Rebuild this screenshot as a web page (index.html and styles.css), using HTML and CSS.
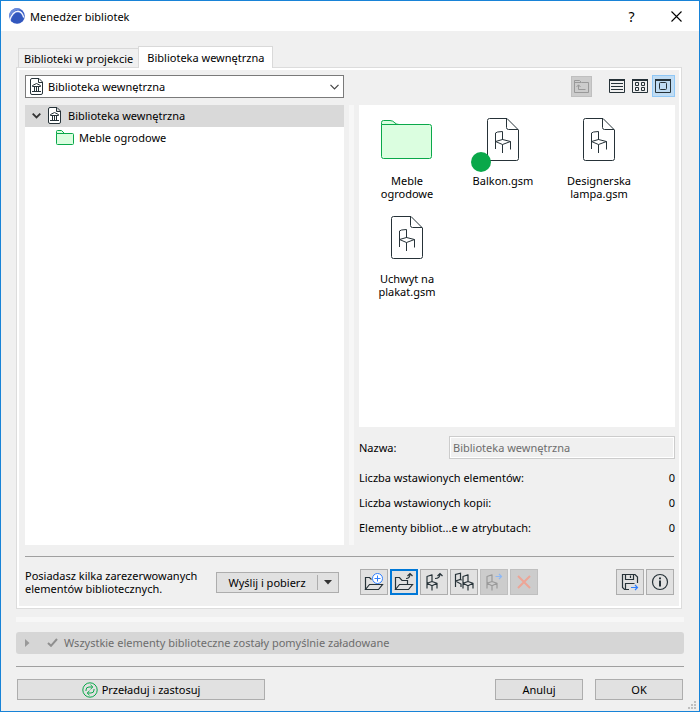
FILE: index.html
```html
<!DOCTYPE html>
<html lang="pl">
<head>
  <meta charset="utf-8">
  <title>Menedżer bibliotek</title>
  <link rel="stylesheet" href="styles.css">
</head>
<body>

<!-- shared icon shapes -->
<svg class="defs" aria-hidden="true">
  <symbol id="libfile" viewBox="0 0 13 17">
    <path d="M.5 2A1.500 1.500 0 0 1 2 .5H9L12.500 4V15A1.500 1.500 0 0 1 11 16.500H2A1.500 1.500 0 0 1 .5 15ZM8.500 .5V4.500H12.500" fill="#fff" stroke="#263238"/>
    <path d="M2.500 7.500 6.500 5.500 10.500 7.500V8.500H2.500ZM2 13.500H11M4.500 8V13M6.500 8V13M8.500 8V13" fill="none" stroke="#263238"/>
  </symbol>
  <symbol id="gsm" viewBox="0 0 96 69">
    <g fill="none" stroke="#263238" stroke-linejoin="round">
      <path d="M34.500 13.500H52L63.500 25V53.500A2 2 0 0 1 61.500 55.500H34.500A2 2 0 0 1 32.500 53.500V15.500A2 2 0 0 1 34.500 13.500ZM51.500 13.500V22.500A2 2 0 0 0 53.500 24.500H63"/>
      <path d="M40.500 44V28L42.500 27 47.500 26.500V35M40.500 36.500 47.500 34.500 55.500 36.500 47.500 39.500ZM55.500 36.500V44.500M47.500 39.500V48"/>
    </g>
  </symbol>
  <symbol id="chair" viewBox="0 0 12 17">
    <path d="M1 14.500V2.500L6 .8V7.500M1 9.200 6 7.500 11 9.200 6 11.700ZM11 9.200V14.500M6 11.700V16.500" fill="none" stroke="currentColor" stroke-width="1.200" stroke-linejoin="round"/>
  </symbol>
</svg>

<div class="window">
  <header class="titlebar">
    <svg class="logo" width="16" height="16" viewBox="0 0 16 16">
      <circle cx="8" cy="8" r="7.800" fill="#3a5fc6"/>
      <path d="M.3 9.500A7.800 7.800 0 0 1 12.500 1.700Q5 .5 .3 9.500Z" fill="#6d8ddd"/>
      <path d="M.8 12Q3.500 3.500 9 3.200Q13 3.300 14.800 9.500" fill="none" stroke="#f2f5ff" stroke-width="1.400"/>
      <path d="M2.300 13.300Q5 5 8.800 4.800Q12.500 5 14.200 12.500Q9 17.500 2.300 13.300Z" fill="#3257bd"/>
    </svg>
    <h1 class="title">Menedżer bibliotek</h1>
    <button class="title-btn" aria-label="Pomoc">?</button>
    <button class="title-btn" aria-label="Zamknij">
      <svg width="11" height="11" viewBox="0 0 11 11"><path d="M.5 .5 10.500 10.500M10.500 .5 .5 10.500" stroke="#000" stroke-width="1.100"/></svg>
    </button>
  </header>

  <main class="content">
    <div class="tabs" role="tablist">
      <button class="tab" role="tab" aria-selected="false">Biblioteki w projekcie</button>
      <button class="tab active" role="tab" aria-selected="true">Biblioteka wewnętrzna</button>
    </div>

    <section class="panel">
      <div class="columns">
        <div class="left">
          <div class="picker">
            <select class="library-select" aria-label="Biblioteka">
              <option>Biblioteka wewnętrzna</option>
            </select>
            <svg class="picker-icon" width="13" height="17"><use href="#libfile"/></svg>
            <svg class="picker-arrow" width="9" height="6" viewBox="0 0 9 6"><path d="M.5 .8 4.500 4.800 8.500 .8" fill="none" stroke="#444" stroke-width="1.200"/></svg>
          </div>
          <ul class="tree">
            <li class="tree-row selected">
              <svg class="tree-arrow" width="9" height="6" viewBox="0 0 9 6"><path d="M.7 .7 4.500 4.500 8.300 .7" fill="none" stroke="#333" stroke-width="1.800"/></svg>
              <svg width="13" height="17"><use href="#libfile"/></svg>
              <span>Biblioteka wewnętrzna</span>
            </li>
            <li class="tree-row child">
              <svg width="18" height="15" viewBox="0 0 18 15"><path d="M.5 3.500V1.500A1 1 0 0 1 1.500 .5H5.500L8.500 3.500H16.500A1 1 0 0 1 17.500 4.500V13.500A1 1 0 0 1 16.500 14.500H1.500A1 1 0 0 1 .5 13.500ZM.5 3.500H9" fill="#dbfee0" stroke="#0aa84a"/></svg>
              <span>Meble ogrodowe</span>
            </li>
          </ul>
        </div>

        <div class="splitter"></div>

        <div class="right">
          <div class="viewbar">
            <button class="up-btn" disabled aria-label="Folder nadrzędny">
              <svg width="15" height="13" viewBox="0 0 15 13"><path d="M.5 12.500V.5H5.500L7.500 2.500H14.500V12.500ZM.5 2.500H7M4.500 5V9.500H11.500M2.500 7 4.500 4.800 6.500 7" fill="none" stroke="#999"/></svg>
            </button>
            <button class="view-btn" aria-label="Lista">
              <svg width="16" height="14" viewBox="0 0 16 14"><path d="M.5 1V13.500H15.500V1M2 4.500H14M2 7.500H14M2 10.500H14" fill="none" stroke="#263238"/><path d="M0 1H16" stroke="#263238" stroke-width="2"/></svg>
            </button>
            <button class="view-btn" aria-label="Małe ikony">
              <svg width="16" height="14" viewBox="0 0 16 14"><path d="M.5 1V13.500H15.500V1M3.500 3.500H6.500V6.500H3.500ZM9.500 3.500H12.500V6.500H9.500ZM3.500 8.500H6.500V11.500H3.500ZM9.500 8.500H12.500V11.500H9.500Z" fill="none" stroke="#263238"/><path d="M0 1H16" stroke="#263238" stroke-width="2"/></svg>
            </button>
            <button class="view-btn on" aria-label="Duże ikony">
              <svg width="16" height="14" viewBox="0 0 16 14"><path d="M.5 1V13.500H15.500V1" fill="none" stroke="#263238"/><rect x="4.500" y="3.500" width="7" height="7" rx="1" fill="none" stroke="#263238"/><path d="M0 1H16" stroke="#263238" stroke-width="2"/></svg>
            </button>
          </div>

          <ul class="files">
            <li class="file">
              <svg width="96" height="69" viewBox="0 0 96 69"><path d="M22.500 19.500V17.500A2 2 0 0 1 24.500 15.500H31Q34 15.500 36 18Q37.500 19.500 40 19.500H70.500A2 2 0 0 1 72.500 21.500V51.500A2 2 0 0 1 70.500 53.500H24.500A2 2 0 0 1 22.500 51.500ZM22.500 19.500H40" fill="#dbfee0" stroke="#0aa84a"/></svg>
              <span class="file-name">Meble ogrodowe</span>
            </li>
            <li class="file">
              <svg width="96" height="69" viewBox="0 0 96 69"><use href="#gsm"/><circle cx="26" cy="57" r="10" fill="#0aa84a"/></svg>
              <span class="file-name">Balkon.gsm</span>
            </li>
            <li class="file">
              <svg width="96" height="69"><use href="#gsm"/></svg>
              <span class="file-name">Designerska lampa.gsm</span>
            </li>
            <li class="file">
              <svg width="96" height="69"><use href="#gsm"/></svg>
              <span class="file-name">Uchwyt na plakat.gsm</span>
            </li>
          </ul>

          <div class="name-row">
            <label for="name">Nazwa:</label>
            <input class="name-input" id="name" type="text" value="Biblioteka wewnętrzna" disabled>
          </div>
          <dl class="stats">
            <div class="stat"><dt>Liczba wstawionych elementów:</dt><dd>0</dd></div>
            <div class="stat"><dt>Liczba wstawionych kopii:</dt><dd>0</dd></div>
            <div class="stat"><dt>Elementy bibliot...e w atrybutach:</dt><dd>0</dd></div>
          </dl>
        </div>
      </div>

      <div class="actions">
        <p class="reserved">Posiadasz kilka zarezerwowanych elementów bibliotecznych.</p>
        <div class="split-btn">
          <button class="split-main">Wyślij i pobierz</button>
          <button class="split-arrow" aria-label="Więcej">
            <svg width="8" height="5" viewBox="0 0 8 5"><path d="M0 0H8L4 4.500Z" fill="#333"/></svg>
          </button>
        </div>
        <div class="tools">
          <button class="tool" aria-label="Nowy folder">
            <svg width="22" height="20" viewBox="0 0 22 20"><path d="M2.500 17.500V5.500H6.500L8.500 7.500M2.500 17.500 6.500 12.500H19.500L15.500 17.500Z" fill="none" stroke="#263238" stroke-width="1.200"/><circle cx="14.500" cy="6.500" r="5" fill="#fff" stroke="#2e7fff"/><path d="M14.500 3.500V9.500M11.500 6.500H17.500" stroke="#2e7fff"/></svg>
          </button>
          <button class="tool focus" aria-label="Przenieś folder">
            <svg width="22" height="20" viewBox="0 0 22 20"><path d="M2.500 17.500V5.500H6.500L9 8.500H14.500V12.500M2.500 17.500 6.500 12.500H19.500L15.500 17.500Z" fill="none" stroke="#263238" stroke-width="1.200"/><path d="M13 6.500Q17 6.500 17 2M14.500 4 17 1.500 19.500 4" fill="none" stroke="#263238" stroke-width="1.200"/></svg>
          </button>
          <button class="tool" aria-label="Przenieś element">
            <svg width="22" height="20" viewBox="0 0 22 20"><use href="#chair" x="3" y="2" width="12" height="17"/><path d="M12 6.500Q17 6.500 17 2M14.500 4 17 1.500 19.500 4" fill="none" stroke="#263238" stroke-width="1.200"/></svg>
          </button>
          <button class="tool" aria-label="Duplikuj">
            <svg width="22" height="20" viewBox="0 0 22 20"><path d="M2.500 15V2.500L7.500 1.200V7.500M2.500 9 7.500 7.500 9 8M2.500 9 8 12V15" fill="none" stroke="#263238" stroke-width="1.200"/><use href="#chair" x="9" y="2" width="12" height="17"/></svg>
          </button>
          <button class="tool" disabled aria-label="Eksportuj element">
            <svg width="22" height="20" viewBox="0 0 22 20"><use href="#chair" x="3" y="2" width="12" height="17"/><path d="M12.500 4.500H18.500M16 2 18.500 4.500 16 7" fill="none" stroke="#8db8f5" stroke-width="1.200"/></svg>
          </button>
          <button class="tool" disabled aria-label="Usuń">
            <svg width="22" height="20" viewBox="0 0 22 20"><path d="M5 4 17 16M17 4 5 16" stroke="#eda596" stroke-width="2"/></svg>
          </button>
        </div>
        <div class="tools end">
          <button class="tool" aria-label="Zapisz jako">
            <svg width="22" height="20" viewBox="0 0 22 20"><path d="M10 17.500H5.500L3.500 15.500V2.500H16L18.500 5V11M6.500 2.500V7.500H14.500V2.500M11.500 3.500V6M6.500 17V11.500H15.500" fill="none" stroke="#263238" stroke-width="1.200"/><path d="M12 15.500H18.500M16 13 18.500 15.500 16 18" fill="none" stroke="#2e7fff" stroke-width="1.200"/></svg>
          </button>
          <button class="tool" aria-label="Informacje">
            <svg width="22" height="20" viewBox="0 0 22 20"><circle cx="11" cy="10" r="7.500" fill="none" stroke="#263238" stroke-width="1.200"/><path d="M11 8.500V14.500M11 5.500V7.300" stroke="#263238" stroke-width="2"/></svg>
          </button>
        </div>
      </div>
    </section>

    <div class="strip"></div>

    <div class="status">
      <svg width="5" height="8" viewBox="0 0 5 8"><path d="M0 0 4.500 4 0 8Z" fill="#999"/></svg>
      <svg class="check" width="11" height="9" viewBox="0 0 11 9"><path d="M1 5 4 7.800 10 1" fill="none" stroke="#8f8f8f" stroke-width="2"/></svg>
      <span>Wszystkie elementy biblioteczne zostały pomyślnie załadowane</span>
    </div>

    <footer class="footer">
      <button class="btn reload">
        <svg width="16" height="16" viewBox="0 0 16 16" fill="none" stroke="#0aa84a"><circle cx="8" cy="8" r="7.200"/><path d="M4 9V8Q4 5 7 5H10.500M8.500 2.800 10.800 5 8.500 7.200M12 7V8Q12 11 9 11H5.500M7.500 8.800 5.200 11 7.500 13.200"/></svg>
        Przeładuj i zastosuj
      </button>
      <button class="btn">Anuluj</button>
      <button class="btn">OK</button>
    </footer>
  </main>

  <svg class="grip" width="8" height="8" viewBox="0 0 8 8"><path d="M6 0H8V2H6ZM3 3H5V5H3ZM6 3H8V5H6ZM0 6H2V8H0ZM3 6H5V8H3ZM6 6H8V8H6Z" fill="#bfbfbf"/></svg>
</div>

</body>
</html>
```
FILE: styles.css
```css
* {
  box-sizing: border-box;
}
body {
  margin: 0;
  font-family: "Noto Sans", "Open Sans", sans-serif;
  font-size: 11px;
  line-height: 13px;
  color: #000;
}
button, input, select {
  font: inherit;
  color: inherit;
  margin: 0;
  padding: 0;
}
button {
  display: flex;
  align-items: center;
  justify-content: center;
  background: #e1e1e1;
  border: 1px solid #adadad;
}
ul, dl, dd, p, h1 {
  margin: 0;
  padding: 0;
  list-style: none;
}
svg {
  display: block;
  flex: none;
}
.defs {
  position: absolute;
  width: 0;
  height: 0;
}

.window {
  position: relative;
  display: flex;
  flex-direction: column;
  min-height: 100vh;
  background: #f0f0f0;
  border: 1px solid #1883d7;
}
.titlebar {
  display: flex;
  align-items: center;
  height: 30px;
  padding-left: 8px;
  background: #fff;
}
.title {
  flex: 1;
  margin-left: 5px;
  font-size: 11px;
  font-weight: normal;
}
.title-btn {
  width: 45px;
  height: 30px;
  background: none;
  border: 0;
  font-size: 14px;
}

.content {
  flex: 1;
  display: flex;
  flex-direction: column;
  padding: 15px 15px 11px;
}

/* tabs */
.tabs {
  display: flex;
  align-items: flex-end;
  padding-left: 2px;
}
.tab {
  height: 19px;
  padding: 0 5px;
  background: #f0f0f0;
  border: 1px solid #d9d9d9;
  border-width: 1px 0 0 1px;
}
.tab.active {
  position: relative;
  height: 22px;
  margin-bottom: -1px;
  padding: 0 8px;
  background: #fff;
  border-width: 1px 1px 0;
}

.panel {
  flex: 1;
  display: flex;
  flex-direction: column;
  margin-right: 2px;
  padding: 5px;
  background: #f0f0f0;
  border: 1px solid #dcdcdc;
  box-shadow: inset 0 0 0 2px #fff;
}
.columns {
  flex: 1;
  display: flex;
  padding: 2px 1px 0 3px;
}
.left {
  flex: 319;
  min-width: 0;
  display: flex;
  flex-direction: column;
}
.splitter {
  width: 5px;
  margin: 30px 5px 0;
  background: #f7f7f7;
}
.right {
  flex: 316;
  min-width: 0;
  display: flex;
  flex-direction: column;
}

/* library picker and tree */
.picker {
  position: relative;
}
.library-select {
  display: block;
  width: 100%;
  height: 23px;
  padding-left: 22px;
  background: #fff;
  border: 1px solid #7a7a7a;
  border-radius: 0;
  appearance: none;
}
.picker-icon {
  position: absolute;
  left: 5px;
  top: 3px;
}
.picker-arrow {
  position: absolute;
  right: 5px;
  top: 9px;
}
.tree {
  flex: 1;
  margin-top: 7px;
  background: #fff;
}
.tree-row {
  display: flex;
  align-items: center;
  gap: 7px;
  height: 22px;
  padding: 0 0 1px 7px;
}
.tree-row.selected {
  background: #d9d9d9;
}
.tree-row.child {
  gap: 5px;
  padding-left: 31px;
}

/* view switches */
.viewbar {
  display: flex;
  align-items: center;
  justify-content: flex-end;
  height: 22px;
}
.up-btn {
  width: 21px;
  height: 21px;
  margin-right: 14px;
  background: #ccc;
  border-color: #bfbfbf;
}
.view-btn {
  width: 23px;
  height: 22px;
  padding-right: 1px;
  background: none;
  border: 0;
}
.view-btn.on {
  background: #c0dcf3;
  border: 1px solid #90c8f6;
}

.files {
  flex: 1;
  display: grid;
  grid-template-columns: repeat(auto-fill, 96px);
  grid-auto-rows: 98px;
  margin-top: 8px;
  background: #fff;
}
.file-name {
  display: block;
  padding: 0 13px;
  text-align: center;
}

.name-row {
  display: flex;
  align-items: center;
  margin-top: 9px;
}
.name-row label {
  width: 90px;
}
.name-input {
  flex: 1;
  min-width: 0;
  height: 23px;
  padding: 0 3px;
  background: #f0f0f0;
  border: 1px solid #ccc;
  box-shadow: inset 0 0 0 1px #fff;
  color: #6d6d6d;
}
.stats {
  padding: 6px 0 5px;
}
.stat {
  display: flex;
  align-items: center;
  justify-content: space-between;
  height: 25px;
}

/* bottom actions */
.actions {
  display: flex;
  align-items: center;
  margin: 11px 2px 0 3px;
  padding: 12px 0 8px;
  border-top: 1px solid #a0a0a0;
}
.reserved {
  width: 191px;
}
.split-btn {
  display: flex;
  width: 123px;
  height: 21px;
  background: #e1e1e1;
  border: 1px solid #adadad;
}
.split-main {
  flex: 1;
  background: none;
  border: 0;
}
.split-arrow {
  width: 21px;
  margin: 2px 0;
  background: none;
  border-width: 0 0 0 1px;
}
.tools {
  display: flex;
  gap: 2px;
  margin-left: 21px;
}
.tools.end {
  margin-left: auto;
}
.tool {
  width: 28px;
  height: 26px;
  color: #263238;
}
.tool.focus {
  border: 2px solid #0078d7;
}
.tool:disabled {
  background: #ccc;
  border-color: #bfbfbf;
  color: #999;
}

.strip {
  height: 5px;
  margin-top: 8px;
  background: #f7f7f7;
}
.status {
  display: flex;
  align-items: center;
  height: 22px;
  margin-top: 10px;
  padding: 0 0 1px 9px;
  background: #d6d6d6;
  border-radius: 3px;
  color: #6d6d6d;
}
.check {
  margin: 0 6px 0 17px;
}
.footer {
  display: flex;
  gap: 12px;
  margin-top: 12px;
  padding: 12px 1px 0;
  border-top: 1px solid #a0a0a0;
}
.btn {
  width: 88px;
  height: 21px;
}
.btn.reload {
  width: 248px;
  gap: 4px;
  margin-right: auto;
}
.grip {
  position: absolute;
  right: 3px;
  bottom: 2px;
}
```
